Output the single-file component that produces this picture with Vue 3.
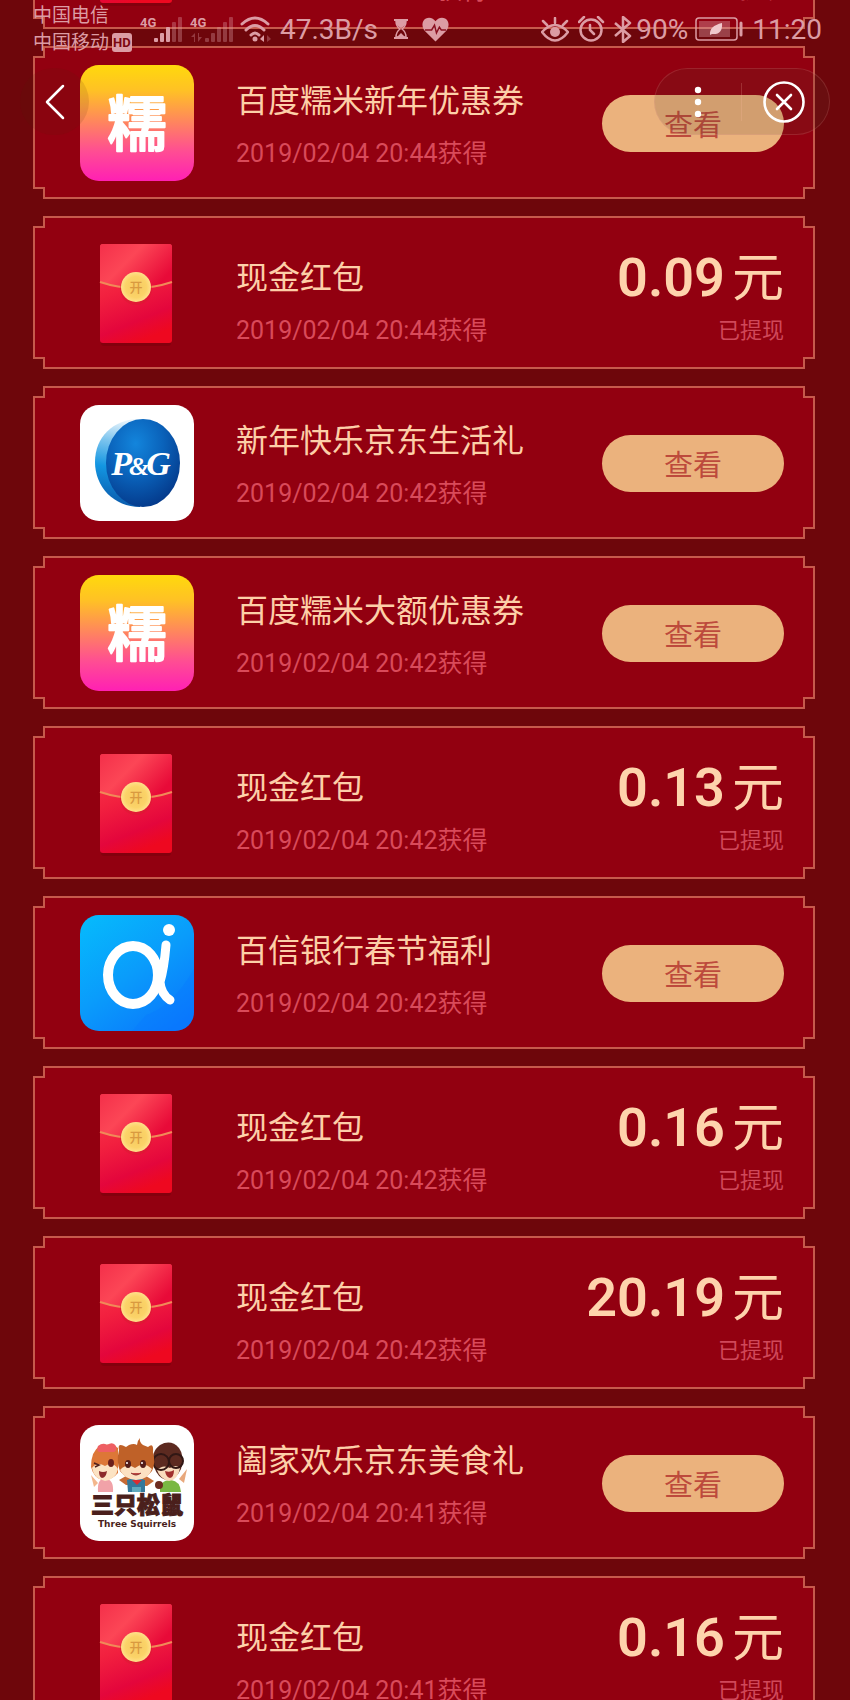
<template>
  <div class="page">
    <!-- Shared gradients -->
    <svg class="gradients" width="0" height="0" aria-hidden="true">
      <defs>
        <linearGradient id="nuomi-bg" x1="0" y1="0" x2="0" y2="1">
          <stop offset="0" stop-color="#ffd90c" />
          <stop offset="0.22" stop-color="#ffc125" />
          <stop offset="0.75" stop-color="#ff4c94" />
          <stop offset="1" stop-color="#ff20b4" />
        </linearGradient>
        <linearGradient id="packet-bg" x1="0.2" y1="0" x2="0.5" y2="1">
          <stop offset="0" stop-color="#fb3a4c" />
          <stop offset="0.45" stop-color="#f2203f" />
          <stop offset="0.8" stop-color="#e4063c" />
          <stop offset="1" stop-color="#ee0820" />
        </linearGradient>
        <linearGradient id="packet-flap" x1="0" y1="0" x2="1" y2="0.6">
          <stop offset="0" stop-color="#f4304a" />
          <stop offset="0.45" stop-color="#fc4656" />
          <stop offset="1" stop-color="#e80a38" />
        </linearGradient>
        <radialGradient id="coin">
          <stop offset="0" stop-color="#f6c860" />
          <stop offset="0.7" stop-color="#fbd368" />
          <stop offset="1" stop-color="#ffe08a" />
        </radialGradient>
        <linearGradient id="pg-edge" x1="0.4" y1="0" x2="0.3" y2="1">
          <stop offset="0" stop-color="#e4f2fb" />
          <stop offset="0.25" stop-color="#7cc4ee" />
          <stop offset="0.55" stop-color="#1396e2" />
          <stop offset="1" stop-color="#0a56a8" />
        </linearGradient>
        <radialGradient id="pg-face" cx="0.4" cy="0.28" r="0.75">
          <stop offset="0" stop-color="#1385dc" />
          <stop offset="0.5" stop-color="#0a62ba" />
          <stop offset="1" stop-color="#04398a" />
        </radialGradient>
        <linearGradient id="bank-bg" x1="0.1" y1="0" x2="0.8" y2="1">
          <stop offset="0" stop-color="#06b9fc" />
          <stop offset="0.5" stop-color="#0a9cfb" />
          <stop offset="1" stop-color="#0a78fc" />
        </linearGradient>
      </defs>
    </svg>

    <ul class="list">
      <li v-for="item in items" :key="item.id" class="card" :class="item.amount ? 'card-cash' : 'card-coupon'">
        <svg class="logo" viewBox="0 0 114 116" aria-hidden="true">
          <g v-if="item.logo === 'nuomi'">
            <rect width="114" height="116" rx="19" fill="url(#nuomi-bg)" />
            <text x="57" y="81" class="logo-nuomi">糯</text>
          </g>

          <g v-else-if="item.logo === 'packet'">
            <rect x="21" y="98" width="70" height="7" rx="3" fill="#7c000c" opacity="0.6" />
            <rect x="20" y="3" width="72" height="99" rx="3" fill="url(#packet-bg)" />
            <path d="M23 3H89a3 3 0 0 1 3 3V41Q56 53 20 41V6a3 3 0 0 1 3-3Z" fill="url(#packet-flap)" />
            <path d="M20 41Q56 53 92 41" fill="none" stroke="#f08a58" stroke-width="2" />
            <circle cx="56" cy="48" r="16" fill="#d81c30" opacity="0.5" />
            <circle cx="56" cy="46" r="15" fill="url(#coin)" />
            <text x="56" y="51" class="logo-open">开</text>
          </g>

          <g v-else-if="item.logo === 'pg'">
            <rect width="114" height="116" rx="19" fill="#fff" />
            <path d="M60 14C33 14 15 32 15 57C15 82 34 102 60 102Z" fill="url(#pg-edge)" />
            <ellipse cx="63" cy="58" rx="37" ry="44" fill="url(#pg-face)" />
            <text x="61" y="70" class="logo-pg">P<tspan class="logo-amp" dx="-3">&amp;</tspan><tspan dx="-3">G</tspan></text>
          </g>

          <g v-else-if="item.logo === 'bank'">
            <rect width="114" height="116" rx="19" fill="url(#bank-bg)" />
            <path d="M66 100Q92 92 114 54V97a19 19 0 0 1-19 19H52Z" fill="#0878ff" opacity="0.35" />
            <ellipse cx="53" cy="60" rx="25" ry="29" fill="none" stroke="#fff" stroke-width="10" />
            <path d="M86 30Q84 54 80 67Q81 79 90 85" fill="none" stroke="#fff" stroke-width="9" stroke-linecap="round" />
            <circle cx="89" cy="15" r="6" fill="#fff" />
          </g>

          <g v-else>
            <rect width="114" height="116" rx="19" fill="#fff" />
            <!-- left squirrel, pink bow -->
            <path d="M11 50L18 58L14 62Z" fill="#f3b78c" />
            <path d="M18 67Q17 53 25 54Q34 54 33 67Z" fill="#f1a2a8" />
            <path d="M11 42Q11 26 20 21Q30 17 38 23L38 48Q31 56 22 55Q14 53 11 42Z" fill="#dd7737" />
            <path d="M12 43Q17 36 25 41Q33 36 38 44Q36 54 25 56Q14 54 12 43Z" fill="#fce3c3" />
            <path d="M18 21Q23 17 27 20Q33 16 36 21Q37 27 33 27L19 27Q16 25 18 21Z" fill="#ee5f63" />
            <path d="M14 38L19 40L15 42" fill="none" stroke="#51201b" stroke-width="1.5" />
            <ellipse cx="31" cy="38" rx="3" ry="4" fill="#6b1f1b" />
            <path d="M19 46Q23 48 27 46Q26 53 22 53Q19 52 19 46Z" fill="#8c2b2b" />
            <!-- right squirrel, glasses -->
            <path d="M107 44L99 54L104 58Z" fill="#e8a87c" />
            <path d="M80 67Q79 55 91 55Q100 56 101 67Z" fill="#79b843" />
            <path d="M74 42Q70 27 80 20Q91 14 99 23Q105 31 101 44Q96 55 86 55Q78 53 74 42Z" fill="#5c2a20" />
            <path d="M77 45Q83 39 90 43Q96 39 100 43Q98 55 89 56Q80 54 77 45Z" fill="#f9dcbd" />
            <circle cx="81" cy="37" r="8" fill="none" stroke="#311714" stroke-width="2" />
            <circle cx="96" cy="36" r="7" fill="none" stroke="#311714" stroke-width="2" />
            <path d="M85 46Q90 48 94 45Q94 52 90 53Q86 52 85 46Z" fill="#a1302e" />
            <circle cx="79" cy="60" r="4" fill="#6d2c20" />
            <!-- middle squirrel, overalls -->
            <path d="M39 55L46 51L66 51L74 56L67 61L46 60Z" fill="#c66b35" />
            <path d="M48 67L47 55Q56 51 65 55L65 67Z" fill="#33789b" />
            <path d="M52 55L57 60L62 55Z" fill="#dc2c30" />
            <path d="M39 25Q37 17 46 22L49 20Q54 18 57 20Q57 16 60 13Q59 17 63 20L68 22Q74 17 73 27Q76 38 72 46Q66 54 56 54Q46 54 40 46Q36 37 39 25Z" fill="#bf6128" />
            <path d="M40 45Q47 37 55 43Q64 36 72 44Q68 55 56 55Q44 54 40 45Z" fill="#fce1c2" />
            <ellipse cx="48" cy="39" rx="3" ry="4" fill="#531c19" />
            <ellipse cx="63" cy="39" rx="3" ry="4" fill="#531c19" />
            <circle cx="47" cy="38" r="1" fill="#fff" />
            <circle cx="62" cy="38" r="1" fill="#fff" />
            <path d="M51 48Q56 52 61 48" fill="#bb4641" stroke="#8c302c" />
            <path d="M52 62H61V67H52Z" fill="#5fa9bd" />
            <text x="57" y="88" class="logo-brand">三只松鼠</text>
            <text x="57" y="102" class="logo-sub">Three Squirrels</text>
          </g>
        </svg>
        <div class="info">
          <h2 class="title">{{ item.title }}</h2>
          <p class="date">{{ item.time }}获得</p>
        </div>
        <div v-if="item.amount" class="cash">
          <p class="amount">{{ item.amount }}<span class="unit">元</span></p>
          <p class="state">已提现</p>
        </div>
        <button v-else type="button" class="view">查看</button>
      </li>
    </ul>

    <header class="status">
      <div class="carriers">
        <span>中国电信</span>
        <span class="carrier">中国移动<b class="hd">HD</b></span>
      </div>
      <div class="signals">
        <svg width="44" height="28" viewBox="0 0 44 28" fill="currentColor" aria-hidden="true">
          <text x="0" y="12" class="net">4G</text>
          <rect x="14" y="23" width="4" height="4" rx="1" />
          <rect x="20" y="18" width="4" height="9" rx="1" />
          <rect x="26" y="12" width="4" height="15" rx="1" />
          <g opacity="0.35"><rect x="32" y="7" width="4" height="20" rx="1" /><rect x="38" y="2" width="4" height="25" rx="1" /></g>
        </svg>
        <svg width="44" height="28" viewBox="0 0 44 28" fill="currentColor" aria-hidden="true">
          <text x="0" y="12" class="net">4G</text>
          <g opacity="0.35">
            <path d="M1 22L5 18V27H4V22ZM8 18H9V22H12L8 27Z" />
            <rect x="15" y="23" width="4" height="4" rx="1" />
            <rect x="21" y="18" width="4" height="9" rx="1" />
            <rect x="27" y="12" width="4" height="15" rx="1" />
            <rect x="33" y="7" width="4" height="20" rx="1" />
            <rect x="39" y="2" width="4" height="25" rx="1" />
          </g>
        </svg>
        <svg width="32" height="28" viewBox="0 0 32 28" fill="none" stroke="currentColor" stroke-width="3" stroke-linecap="round" aria-hidden="true">
          <path d="M2 9Q15-3 28 9M6 15Q15 6 24 15M11 20Q15 16 19 20" />
          <circle cx="15" cy="24" r="2.5" fill="currentColor" stroke="none" />
          <path d="M20 24L24 20V27Z" fill="currentColor" stroke="none" />
          <path d="M27 20L31 24L27 27Z" fill="currentColor" stroke="none" opacity="0.35" />
        </svg>
      </div>
      <span class="speed">47.3B/s</span>
      <svg class="hourglass" width="14" height="20" viewBox="0 0 14 20" aria-hidden="true">
        <path d="M0 1H14M0 19H14" stroke="currentColor" stroke-width="2" />
        <path d="M2 2H12Q12 7 8 10Q12 13 12 18H2Q2 13 6 10Q2 7 2 2Z" fill="none" stroke="currentColor" stroke-width="1.5" />
        <path d="M2 2H12Q12 7 7 9Q2 7 2 2ZM3 18L7 14L11 18Z" fill="currentColor" />
      </svg>
      <svg width="27" height="25" viewBox="0 0 28 25" aria-hidden="true">
        <path d="M14 25L3 14C-1 9 0 3 4 1C8-1 12 1 14 4C16 1 20-1 24 1C28 3 29 9 25 14Z" fill="currentColor" />
        <path d="M3 13H10L13 8L15 16L18 10L20 13H25" fill="none" stroke="#8a1020" stroke-width="1.5" />
      </svg>
      <div class="system">
        <svg width="28" height="25" viewBox="0 0 28 25" fill="none" stroke="currentColor" stroke-width="2.5" stroke-linecap="round" aria-hidden="true">
          <path d="M1 15Q14 1 27 15Q14 32 1 15ZM14 6V1M6 8L2 4M22 8L26 4" />
          <circle cx="14" cy="15" r="5" fill="currentColor" stroke="none" />
        </svg>
        <svg width="27" height="26" viewBox="0 0 27 26" fill="none" stroke="currentColor" stroke-width="2.5" stroke-linecap="round" aria-hidden="true">
          <circle cx="13" cy="14" r="10.5" />
          <path d="M1 6L6 1M25 6L20 1M12 9V14L16 18" />
        </svg>
        <svg width="18" height="27" viewBox="0 0 18 27" fill="none" stroke="currentColor" stroke-width="2.5" stroke-linejoin="round" aria-hidden="true">
          <path d="M1 7L16 20L9 26V1L16 7L1 20" />
        </svg>
        <span class="percent">90%</span>
        <svg width="48" height="24" viewBox="0 0 48 24" aria-hidden="true">
          <rect x="1" y="1" width="41" height="22" rx="3" fill="none" stroke="currentColor" stroke-width="1.5" />
          <rect x="4" y="4" width="31" height="16" fill="currentColor" opacity="0.4" />
          <path d="M15 18Q14 9 27 6Q28 18 17 17Z" fill="#f0c8cc" />
          <path d="M46 6V18" stroke="currentColor" stroke-width="3" stroke-linecap="round" />
        </svg>
        <time>11:20</time>
      </div>
    </header>

    <nav class="nav">
      <button type="button" class="back" aria-label="返回">
        <svg width="20" height="36" viewBox="0 0 20 36" fill="none" stroke="#fff" stroke-width="2.5" stroke-linecap="round" stroke-linejoin="round"><path d="M18 2L2 18L18 34" /></svg>
      </button>
      <div class="capsule">
        <button type="button" class="more" aria-label="更多">
          <svg width="8" height="32" viewBox="0 0 8 32" fill="#fff"><circle cx="4" cy="4" r="3.2" /><circle cx="4" cy="16" r="3.2" /><circle cx="4" cy="28" r="3.2" /></svg>
        </button>
        <button type="button" class="close" aria-label="关闭">
          <svg width="42" height="42" viewBox="0 0 42 42" fill="none" stroke="#fff" stroke-width="2.6" stroke-linecap="round"><circle cx="21" cy="21" r="19.5" /><path d="M14 14L28 28M28 14L14 28" /></svg>
        </button>
      </div>
    </nav>
  </div>
</template>

<script setup>
import { ref } from 'vue';

const items = ref([
  { id: 1, logo: 'packet', title: '现金红包', time: '2019/02/04 20:44', amount: '0.09' },
  { id: 2, logo: 'nuomi', title: '百度糯米新年优惠券', time: '2019/02/04 20:44' },
  { id: 3, logo: 'packet', title: '现金红包', time: '2019/02/04 20:44', amount: '0.09' },
  { id: 4, logo: 'pg', title: '新年快乐京东生活礼', time: '2019/02/04 20:42' },
  { id: 5, logo: 'nuomi', title: '百度糯米大额优惠券', time: '2019/02/04 20:42' },
  { id: 6, logo: 'packet', title: '现金红包', time: '2019/02/04 20:42', amount: '0.13' },
  { id: 7, logo: 'bank', title: '百信银行春节福利', time: '2019/02/04 20:42' },
  { id: 8, logo: 'packet', title: '现金红包', time: '2019/02/04 20:42', amount: '0.16' },
  { id: 9, logo: 'packet', title: '现金红包', time: '2019/02/04 20:42', amount: '20.19' },
  { id: 10, logo: 'squirrels', title: '阖家欢乐京东美食礼', time: '2019/02/04 20:41' },
  { id: 11, logo: 'packet', title: '现金红包', time: '2019/02/04 20:41', amount: '0.16' },
]);
</script>

<style>
body {
  margin: 0;
  background: #6e060b;
}
</style>

<style scoped>
.page {
  position: relative;
  height: 100vh;
  overflow: hidden;
  background: #6e060b;
  font-family: Roboto, 'Noto Sans CJK SC', sans-serif;
}

.gradients {
  position: absolute;
}

h2,
p {
  margin: 0;
  font-weight: 400;
}

button {
  padding: 0;
  border: 0;
  background: none;
  font-family: inherit;
  cursor: pointer;
}

/* The list is scrolled: its first card is mostly above the window */
.list {
  display: flex;
  flex-direction: column;
  gap: 17px;
  margin: -124px 35px 0 33px;
  padding: 0;
  list-style: none;
}

/* Notched frame: border colour below, fill on top with the same cut corners */
.card,
.card::before {
  clip-path: polygon(
    10px 0, calc(100% - 10px) 0, calc(100% - 10px) 10px, 100% 10px,
    100% calc(100% - 10px), calc(100% - 10px) calc(100% - 10px), calc(100% - 10px) 100%, 10px 100%,
    10px calc(100% - 10px), 0 calc(100% - 10px), 0 10px, 10px 10px
  );
}

.card {
  position: relative;
  isolation: isolate;
  display: flex;
  align-items: flex-start;
  box-sizing: border-box;
  min-height: 153px;
  padding: 0 31px 0 47px;
  background: #c65a4c;
}

.card::before {
  content: '';
  position: absolute;
  inset: 2px;
  z-index: -1;
  background: #920010;
}

.logo {
  flex: none;
  width: 114px;
  height: 116px;
  margin-top: 19px;
}

.logo text {
  text-anchor: middle;
}

.logo-nuomi {
  fill: #fff;
  stroke: #fff;
  stroke-width: 2px;
  stroke-linejoin: round;
  font: 500 60px 'Noto Sans CJK SC', sans-serif;
}

.logo-open {
  fill: #d99a40;
  font: 500 13px 'Noto Sans CJK SC', sans-serif;
}

.logo-pg {
  fill: #fff;
  font: italic 700 34px 'Liberation Serif', serif;
}

.logo-amp {
  font-size: 26px;
}

.logo-brand {
  fill: #4a1f1c;
  stroke: #4a1f1c;
  font: 900 23px 'Noto Sans CJK SC', sans-serif;
}

.logo-sub {
  fill: #4a1f1c;
  font: 700 9px 'DejaVu Sans', sans-serif;
}

.card-cash .logo {
  margin-top: 25px;
}

.info {
  flex: 1;
  padding: 35px 0 0 42px;
}

.card-cash .info {
  padding-top: 42px;
}

.title {
  color: #fdcfa8;
  font-size: 32px;
  line-height: 40px;
}

.date {
  margin-top: 17px;
  color: #d94a5a;
  font-size: 25px;
  line-height: 32px;
}

.cash {
  padding-top: 32px;
  text-align: right;
}

.amount {
  color: #fed3ac;
  font-size: 54px;
  font-weight: 600;
  line-height: 60px;
}

.unit {
  margin-left: 7px;
  font-size: 52px;
  font-weight: 400;
}

.state {
  margin-top: 8px;
  color: #d0485a;
  font-size: 22px;
  line-height: 28px;
}

.view {
  width: 182px;
  height: 57px;
  margin-top: 49px;
  padding-bottom: 2px;
  border-radius: 29px;
  background: #ebb27d;
  color: #bd4a3c;
  font-size: 29px;
}

/* System status bar */
.status {
  position: absolute;
  top: 0;
  left: 0;
  right: 0;
  display: flex;
  align-items: center;
  box-sizing: border-box;
  height: 58px;
  padding: 0 28px 0 33px;
  color: #dc9ca4;
  font-size: 28px;
  white-space: nowrap;
}

.carriers {
  display: flex;
  flex-direction: column;
  width: 107px;
  font-size: 19px;
  line-height: 27px;
}

.carrier {
  display: flex;
  align-items: center;
  gap: 3px;
}

.hd {
  padding: 0 1px;
  border-radius: 3px;
  background: #dc9ca4;
  color: #7c0711;
  font-size: 13px;
  line-height: 19px;
}

.signals {
  display: flex;
  gap: 6px;
}

.net {
  font: 700 13px Roboto, sans-serif;
}

.speed {
  margin-left: 8px;
}

.hourglass {
  margin: 0 14px 0 16px;
}

.system {
  display: flex;
  align-items: center;
  gap: 9px;
  margin-left: auto;
}

.percent {
  margin: 0 -2px 0 -5px;
}

/* Mini-app controls */
.nav {
  position: absolute;
  top: 68px;
  left: 0;
  right: 0;
  display: flex;
  justify-content: space-between;
  padding: 0 20px;
}

.back {
  display: flex;
  align-items: center;
  justify-content: center;
  width: 69px;
  height: 67px;
  border-radius: 34px;
  background: rgba(80, 30, 10, 0.12);
}

.capsule {
  display: flex;
  align-items: center;
  box-sizing: border-box;
  height: 67px;
  border: 1px solid rgba(255, 170, 170, 0.16);
  border-radius: 34px;
  background: rgba(90, 60, 40, 0.17);
}

.more,
.close {
  display: flex;
  align-items: center;
  justify-content: center;
  height: 38px;
}

.more {
  width: 86px;
}

.close {
  width: 88px;
  padding-right: 4px;
  border-left: 1px solid rgba(255, 190, 170, 0.2);
}
</style>
